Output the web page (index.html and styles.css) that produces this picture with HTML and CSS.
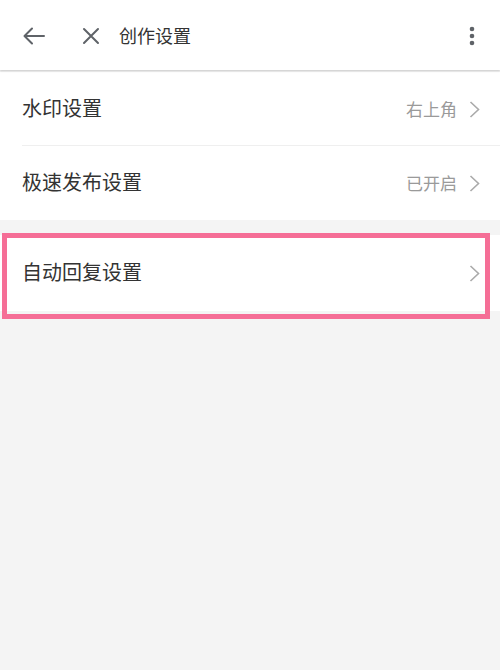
FILE: index.html
```html
<!DOCTYPE html>
<html lang="zh-CN">
<head>
<meta charset="utf-8">
<title>创作设置</title>
<link rel="stylesheet" href="styles.css">
</head>
<body>
<header class="topbar">
  <span class="icon back">
    <svg width="22" height="18" viewBox="0 0 22 18"><path d="M21 9H2M9 1.5L1.5 9L9 16.5" fill="none" stroke="#5f6368" stroke-width="2" stroke-linecap="round" stroke-linejoin="round"/></svg>
  </span>
  <span class="icon close">
    <svg width="18" height="18" viewBox="0 0 18 18"><path d="M2 2L16 16M16 2L2 16" fill="none" stroke="#5f6368" stroke-width="2" stroke-linecap="round"/></svg>
  </span>
  <span class="title">创作设置</span>
  <span class="more">
    <svg width="6" height="20" viewBox="0 0 6 20"><circle cx="3" cy="3" r="2.3" fill="#5f6368"/><circle cx="3" cy="10" r="2.3" fill="#5f6368"/><circle cx="3" cy="17" r="2.3" fill="#5f6368"/></svg>
  </span>
</header>
<main class="content">
  <section class="group">
    <div class="row divided">
      <span class="label">水印设置</span>
      <span class="value">右上角</span>
      <span class="chev"><svg width="11" height="17" viewBox="0 0 11 17"><path d="M1.5 1L9.5 8.5L1.5 16" fill="none" stroke="#aaaaaa" stroke-width="1.6"/></svg></span>
    </div>
    <div class="row">
      <span class="label">极速发布设置</span>
      <span class="value">已开启</span>
      <span class="chev"><svg width="11" height="17" viewBox="0 0 11 17"><path d="M1.5 1L9.5 8.5L1.5 16" fill="none" stroke="#aaaaaa" stroke-width="1.6"/></svg></span>
    </div>
  </section>
  <section class="group group-reply">
    <div class="row tall">
      <span class="label">自动回复设置</span>
      <span class="chev"><svg width="11" height="17" viewBox="0 0 11 17"><path d="M1.5 1L9.5 8.5L1.5 16" fill="none" stroke="#aaaaaa" stroke-width="1.6"/></svg></span>
    </div>
    <div class="highlight"></div>
  </section>
</main>
</body>
</html>
```
FILE: styles.css
```css
html, body {
  margin: 0;
  padding: 0;
}
body {
  width: 500px;
  height: 670px;
  background: #f4f4f4;
  font-family: "Noto Sans CJK SC", "Noto Sans", sans-serif;
  color: #333333;
  overflow: hidden;
}
.topbar {
  height: 70px;
  background: #ffffff;
  display: flex;
  align-items: center;
  box-shadow: 0 1px 2px rgba(0, 0, 0, 0.18);
  position: relative;
  z-index: 2;
}
.icon {
  display: flex;
  align-items: center;
}
.back {
  margin-left: 23px;
  margin-top: 2px;
}
.close {
  margin-left: 37px;
  margin-top: 2px;
}
.title {
  margin-left: 19px;
  font-size: 18px;
  color: #333333;
}
.more {
  margin-left: auto;
  margin-right: 25px;
  display: flex;
  margin-top: 2px;
}
.content {
  padding-top: 2px;
}
.group {
  background: #ffffff;
}
.group-reply {
  margin-top: 15px;
  position: relative;
}
.row {
  height: 74px;
  display: flex;
  align-items: center;
  padding: 0 20px 0 22px;
  position: relative;
}
.row.divided::after {
  content: "";
  position: absolute;
  left: 22px;
  right: 0;
  bottom: 0;
  height: 1px;
  background: #efefef;
}
.row.tall {
  height: 76px;
}
.label {
  font-size: 20px;
  color: #333333;
  flex: 1;
  margin-top: -3px;
}
.value {
  font-size: 17px;
  color: #9a9a9a;
  margin-right: 12px;
  margin-top: -2px;
}
.chev {
  display: flex;
  align-items: center;
}
.highlight {
  position: absolute;
  left: 2px;
  top: -2px;
  width: 478px;
  height: 76px;
  border: 5px solid #f56e96;
  pointer-events: none;
}
```
